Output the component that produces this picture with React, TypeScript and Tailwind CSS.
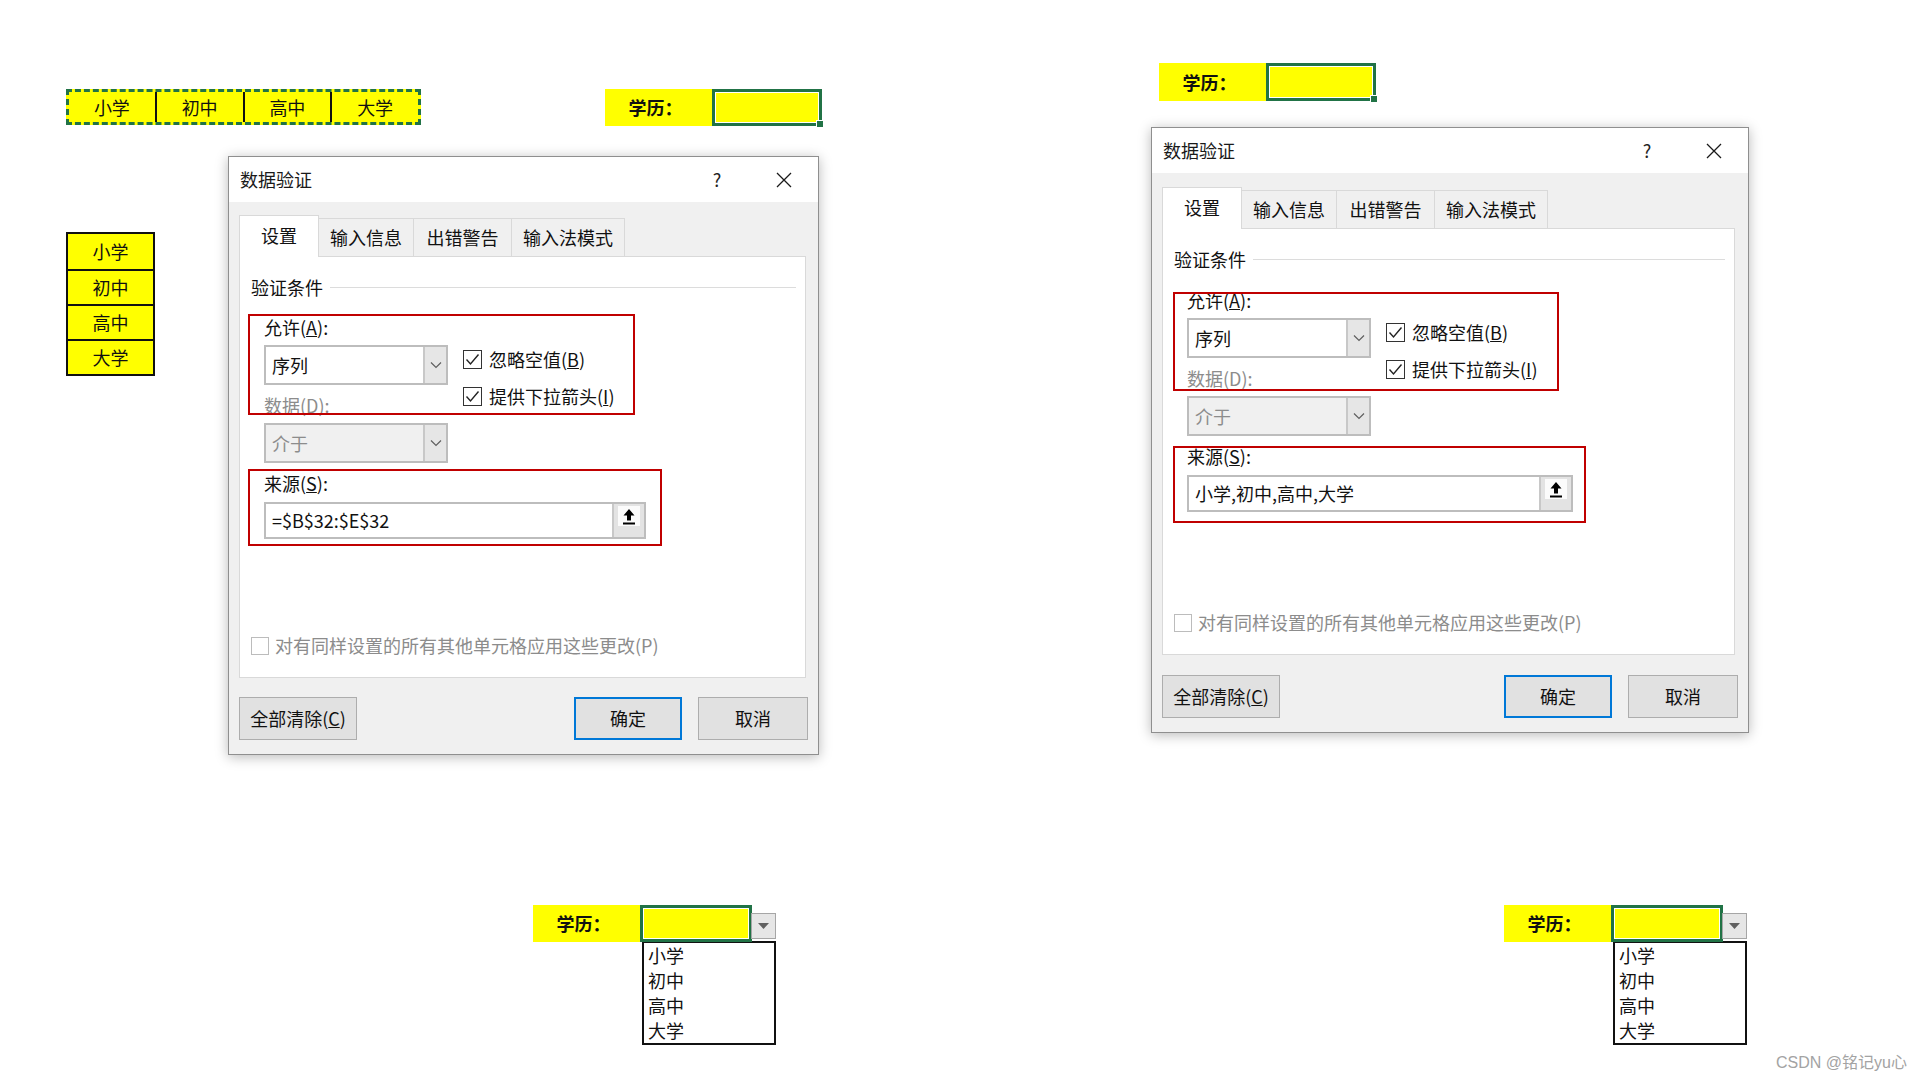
import React from "react";

function Chevron() {
  return (
    <svg width="12" height="8" viewBox="0 0 12 8">
      <polyline points="1,1.5 6,6.5 11,1.5" fill="none" stroke="#5f5f5f" strokeWidth="1.2" />
    </svg>
  );
}

function CloseIcon() {
  return (
    <svg width="16" height="16" viewBox="0 0 16 16">
      <path d="M1 1 L15 15 M15 1 L1 15" stroke="#1a1a1a" strokeWidth="1.3" />
    </svg>
  );
}

function UploadIcon() {
  return (
    <svg width="14" height="17" viewBox="0 0 14 17">
      <path d="M7 1 L1.5 7.5 H5 V12.5 H9 V7.5 H12.5 Z" fill="#000" />
      <rect x="1" y="14.5" width="12" height="2" fill="#000" />
    </svg>
  );
}

function CheckBox({ checked }: { checked: boolean }) {
  return (
    <div className="flex h-[19px] w-[19px] items-center justify-center border-[1.5px] border-[#333] bg-white">
      {checked && (
        <svg width="15" height="13" viewBox="0 0 15 13">
          <polyline points="1.5,6.5 5.5,11 13.5,1.5" fill="none" stroke="#222" strokeWidth="1.4" />
        </svg>
      )}
    </div>
  );
}

function Combo({ value, disabled }: { value: string; disabled?: boolean }) {
  return (
    <div className={`flex h-[40px] w-[184px] border-2 border-[#bdbdbd] ${disabled ? "bg-[#f0f0f0] text-[#8c8c8c]" : "bg-white text-[#111]"}`}>
      <div className="flex flex-1 items-center pl-[6px] text-[18px]">{value}</div>
      <div className="flex w-[23px] items-center justify-center border-l-2 border-[#c8c8c8] bg-[#e6e6e6]">
        <Chevron />
      </div>
    </div>
  );
}

type DialogProps = {
  frame: string;
  tabsTop: string;
  panel: string;
  mainTop: string;
  box1: string;
  box2: string;
  source: string;
  sourceWidth: string;
  footerTop: string;
};

function Dialog(p: DialogProps) {
  return (
    <div className={`absolute flex flex-col border border-[#8f8f8f] bg-[#f0f0f0] shadow-[0_2px_12px_rgba(0,0,0,0.28)] ${p.frame}`}>
      <div className="flex h-[45px] items-center bg-white pl-[11px] pr-[24px]">
        <span className="text-[18px] text-[#1a1a1a]">数据验证</span>
        <span className="ml-auto mr-[47px] w-[20px] text-center text-[18px] text-[#222]">?</span>
        <span className="flex w-[20px] justify-center">
          <CloseIcon />
        </span>
      </div>

      <div className="flex flex-1 flex-col px-[10px]">
        <div className={`flex items-end ${p.tabsTop}`}>
          <div className="relative z-10 -mb-px flex h-[42px] w-[80px] items-center justify-center border border-b-0 border-[#d9d9d9] bg-white pb-[3px] text-[18px] text-[#111]">
            设置
          </div>
          <div className="flex h-[38px] w-[95px] items-center justify-center border border-b-0 border-l-0 border-[#d9d9d9] text-[18px] text-[#111]">输入信息</div>
          <div className="flex h-[38px] w-[98px] items-center justify-center border border-b-0 border-l-0 border-[#d9d9d9] text-[18px] text-[#111]">出错警告</div>
          <div className="flex h-[38px] w-[113px] items-center justify-center border border-b-0 border-l-0 border-[#d9d9d9] text-[18px] text-[#111]">输入法模式</div>
        </div>

        <div className={`relative flex flex-col border border-[#d9d9d9] bg-white ${p.panel}`}>
          <div className="mt-[18px] flex h-[24px] items-center pl-[11px] pr-[9px]">
            <span className="text-[18px] text-[#111]">验证条件</span>
            <div className="ml-[7px] h-px flex-1 bg-[#dcdcdc]" />
          </div>

          <div className={`flex pl-[24px] ${p.mainTop}`}>
            <div className="flex w-[184px] flex-col">
              <div className="h-[22px] text-[18px] leading-[22px] text-[#111]">
                允许(<span className="underline">A</span>):
              </div>
              <div className="mt-[7px]">
                <Combo value="序列" />
              </div>
              <div className="mt-[9px] h-[22px] text-[18px] leading-[22px] text-[#8c8c8c]">数据(D):</div>
              <div className="mt-[7px]">
                <Combo value="介于" disabled />
              </div>
            </div>
            <div className="ml-[15px] flex flex-col">
              <div className="mt-[34px] flex h-[19px] items-center gap-[7px]">
                <CheckBox checked />
                <span className="text-[18px] text-[#111]">
                  忽略空值(<span className="underline">B</span>)
                </span>
              </div>
              <div className="mt-[18px] flex h-[19px] items-center gap-[7px]">
                <CheckBox checked />
                <span className="text-[18px] text-[#111]">
                  提供下拉箭头(<span className="underline">I</span>)
                </span>
              </div>
            </div>
          </div>

          <div className="mt-[9px] h-[22px] pl-[24px] text-[18px] leading-[22px] text-[#111]">
            来源(<span className="underline">S</span>):
          </div>
          <div className="mt-[8px] pl-[24px]">
            <div className={`flex h-[37px] border-2 border-[#bdbdbd] bg-white ${p.sourceWidth}`}>
              <div className="flex flex-1 items-center pl-[6px] text-[18px] text-[#111]">{p.source}</div>
              <div className="flex w-[32px] flex-col items-center border-l-2 border-[#c8c8c8] bg-[#e3e3e3] pt-[2px]">
                <div className="flex h-[20px] w-[22px] items-center justify-center bg-[#fbfbfb]">
                  <UploadIcon />
                </div>
              </div>
            </div>
          </div>

          <div className="mb-[22px] mt-auto flex h-[19px] items-center gap-[6px] pl-[11px]">
            <div className="h-[18px] w-[18px] border border-[#bcbcbc] bg-white" />
            <span className="text-[18px] text-[#8c8c8c]">对有同样设置的所有其他单元格应用这些更改(P)</span>
          </div>

          <div className={`absolute border-2 border-[#c00000] ${p.box1}`} />
          <div className={`absolute border-2 border-[#c00000] ${p.box2}`} />
        </div>

        <div className={`flex ${p.footerTop}`}>
          <div className="flex h-[43px] w-[118px] items-center justify-center border border-[#adadad] bg-[#e1e1e1] text-[18px] text-[#111]">
            全部清除(<span className="underline">C</span>)
          </div>
          <div className="ml-auto flex h-[43px] w-[108px] items-center justify-center border-2 border-[#0078d7] bg-[#e1e1e1] text-[18px] text-[#111]">
            确定
          </div>
          <div className="ml-[16px] flex h-[43px] w-[110px] items-center justify-center border border-[#adadad] bg-[#e1e1e1] text-[18px] text-[#111]">
            取消
          </div>
        </div>
      </div>
    </div>
  );
}

function SelectedCell({ width }: { width: string }) {
  return (
    <div className={`relative h-full border-[3px] border-[#217346] bg-[#ffff00] ${width}`}>
      <div className="h-full w-full border border-white" />
      <div className="absolute -bottom-[5px] -right-[5px] h-[8px] w-[8px] border border-white bg-[#217346]" />
    </div>
  );
}

function Label() {
  return (
    <div className="flex h-full w-[107px] items-center justify-center bg-[#ffff00] pr-[6px] text-[18px] font-bold text-[#111]">
      学历：
    </div>
  );
}

function DropdownCell({ pos }: { pos: string }) {
  const items = ["小学", "初中", "高中", "大学"];
  return (
    <div className={`absolute ${pos}`}>
      <div className="flex h-[37px] items-start">
        <Label />
        <div className="h-[37px] w-[112px] border-[3px] border-[#217346] bg-[#ffff00]">
          <div className="h-full w-full border border-white" />
        </div>
        <div className="-ml-px mt-[8px] flex h-[26px] w-[25px] items-center justify-center border border-[#a6a6a6] bg-[#e6e6e6]">
          <svg width="11" height="6" viewBox="0 0 11 6">
            <polygon points="0,0 11,0 5.5,6" fill="#606060" />
          </svg>
        </div>
      </div>
      <div className="ml-[109px] -mt-px h-[104px] w-[134px] border-2 border-[#111] bg-white pl-[4px]">
        {items.map((t) => (
          <div key={t} className="h-[25px] text-[18px] leading-[25px] text-[#111]">
            {t}
          </div>
        ))}
      </div>
    </div>
  );
}

export default function App() {
  const edu = ["小学", "初中", "高中", "大学"];
  return (
    <div className="relative h-[1080px] w-[1920px] overflow-hidden bg-white font-['Noto_Sans_CJK_SC','Microsoft_YaHei',sans-serif]">
      {/* horizontal source range with marching ants */}
      <div className="absolute left-[66px] top-[89px] flex h-[36px] w-[355px] border-[3px] border-dashed border-[#217346] bg-[#ffff00]">
        {edu.map((t, i) => (
          <div key={t} className={`flex flex-1 items-center justify-center text-[18px] text-[#111] ${i > 0 ? "border-l-2 border-[#111]" : ""}`}>
            {t}
          </div>
        ))}
      </div>

      {/* vertical list */}
      <div className="absolute left-[66px] top-[232px] w-[89px] border-2 border-[#111] bg-[#ffff00]">
        {edu.map((t, i) => (
          <div key={t} className={`flex h-[35px] items-center justify-center text-[18px] text-[#111] ${i > 0 ? "border-t-2 border-[#111]" : ""}`}>
            {t}
          </div>
        ))}
      </div>

      {/* top selected cells */}
      <div className="absolute left-[605px] top-[89px] flex h-[37px]">
        <Label />
        <SelectedCell width="w-[110px]" />
      </div>
      <div className="absolute left-[1159px] top-[63px] flex h-[38px]">
        <Label />
        <SelectedCell width="w-[110px]" />
      </div>

      <Dialog
        frame="left-[228px] top-[156px] w-[591px] h-[599px]"
        tabsTop="mt-[13px]"
        panel="w-[567px] h-[422px]"
        mainTop="mt-[17px]"
        box1="left-[8px] top-[57px] w-[387px] h-[101px]"
        box2="left-[8px] top-[212px] w-[414px] h-[77px]"
        source="=$B$32:$E$32"
        sourceWidth="w-[382px]"
        footerTop="mt-[19px]"
      />

      <Dialog
        frame="left-[1151px] top-[127px] w-[598px] h-[606px]"
        tabsTop="mt-[14px]"
        panel="w-[573px] h-[427px]"
        mainTop="mt-[18px]"
        box1="left-[10px] top-[63px] w-[386px] h-[99px]"
        box2="left-[10px] top-[217px] w-[413px] h-[77px]"
        source="小学,初中,高中,大学"
        sourceWidth="w-[386px]"
        footerTop="mt-[20px]"
      />

      <DropdownCell pos="left-[533px] top-[905px]" />
      <DropdownCell pos="left-[1504px] top-[905px]" />

      <div className="absolute left-[1776px] top-[1051px] font-['Liberation_Sans','Noto_Sans_CJK_SC',sans-serif] text-[16px] text-[#a3a3a3]">
        CSDN @铭记yu心
      </div>
    </div>
  );
}
